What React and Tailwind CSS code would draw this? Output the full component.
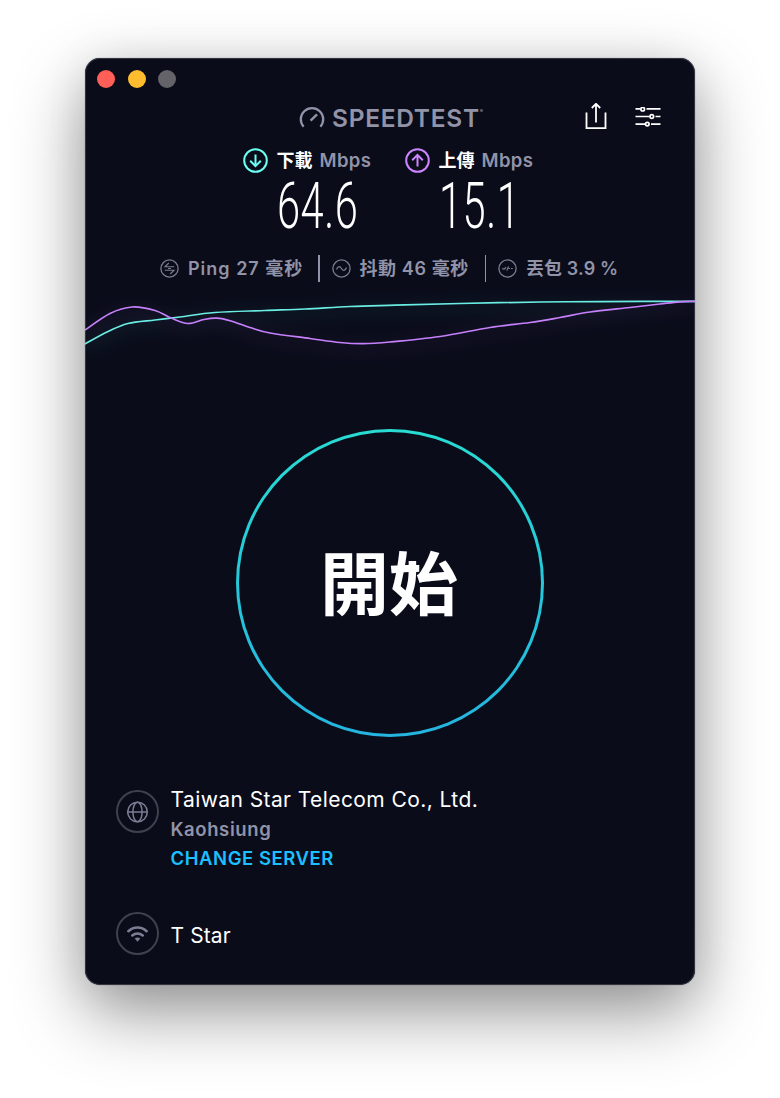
const DOWNLOAD = [[0, 54], [22, 42], [43, 33.5], [70, 30], [95, 27], [130, 22.5], [180, 20.5], [220, 19], [265, 16.5], [310, 15.2], [375, 13.5], [455, 12], [515, 11.6], [610, 11.3]];
const UPLOAD = [[0, 40], [25, 23.5], [47, 17], [70, 20.5], [86, 28], [103, 33.5], [119, 29.5], [132, 28.2], [146, 31], [165, 37.5], [185, 43], [225, 48.5], [255, 52.5], [278, 53.7], [305, 52], [355, 46.5], [405, 37.5], [445, 32.5], [475, 27.5], [505, 22], [545, 17.5], [575, 14], [595, 11.8], [610, 11.3]];

function smoothPath(pts) {
  let d = `M${pts[0][0]} ${pts[0][1]}`;
  for (let i = 0; i < pts.length - 1; i++) {
    const p0 = pts[i - 1] || pts[i];
    const p1 = pts[i];
    const p2 = pts[i + 1];
    const p3 = pts[i + 2] || p2;
    d += ` C${p1[0] + (p2[0] - p0[0]) / 6} ${p1[1] + (p2[1] - p0[1]) / 6} ${p2[0] - (p3[0] - p1[0]) / 6} ${p2[1] - (p3[1] - p1[1]) / 6} ${p2[0]} ${p2[1]}`;
  }
  return d;
}

function GaugeLogo() {
  return (
    <svg className="h-[22px] w-[26px] shrink-0" viewBox="0 0 26 22" fill="none" stroke="#9193a8">
      <path d="M4.6 20.7A11.2 11.2 0 1 1 21.4 20.7" strokeWidth="2.3" />
      <path d="M11.6 14.7L18 8.3" strokeWidth="2.4" />
    </svg>
  );
}

function ShareIcon() {
  return (
    <svg className="h-[28px] w-[22px]" viewBox="0 0 22 28" fill="none" stroke="#fff" strokeWidth="1.8">
      <path d="M1.5 9.5V25.2H20.5V9.5" />
      <path d="M11 19.5V1.2M6.8 5L11 .8L15.2 5" />
    </svg>
  );
}

function SlidersIcon() {
  return (
    <svg className="h-[20px] w-[26px]" viewBox="0 0 26 20" fill="none" stroke="#fff" strokeWidth="1.7">
      <path d="M.5 1.8H5.5M11.5 1.8H25.5M.5 9.5H14.5M20.5 9.5H25.5M.5 17.1H10M16 17.1H25.5" />
      <circle cx="7.7" cy="2.2" r="1.8" />
      <circle cx="16.8" cy="9.5" r="1.8" />
      <circle cx="12.3" cy="17.1" r="1.8" />
    </svg>
  );
}

function ArrowCircle({ color, up }) {
  return (
    <svg className="h-[25px] w-[25px] shrink-0" viewBox="0 0 25 25" fill="none" stroke={color} strokeWidth="2">
      <circle cx="12.5" cy="12.5" r="11.3" />
      {up ? <path d="M12.5 18.6V7.2M7.2 12.2L12.5 6.9L17.8 12.2" /> : <path d="M12.5 6.4V17.8M7.2 12.8L12.5 18.1L17.8 12.8" />}
    </svg>
  );
}

function Result({ color, up, label, value }) {
  return (
    <div className="flex w-[162px] gap-[9px]">
      <ArrowCircle color={color} up={up} />
      <div className="flex flex-col">
        <div className="flex h-[25px] items-center gap-[7px] whitespace-nowrap">
          <span className="text-[18px] font-bold text-white">{label}</span>
          <span className="text-[18.5px] font-semibold tracking-[0.35px] text-[#9193a8]">Mbps</span>
        </div>
        <div className="mt-[3px] h-[62px] origin-left scale-x-[0.65] whitespace-nowrap font-['Roboto',sans-serif] text-[64px] font-light leading-[62px] tracking-[0.8px] text-white">
          {value}
        </div>
      </div>
    </div>
  );
}

function StatIcon({ children }) {
  return (
    <svg className="h-[19px] w-[19px] shrink-0" viewBox="0 0 19 19" fill="none" stroke="#7b7d92" strokeWidth="1.3">
      <circle cx="9.5" cy="9.5" r="8.6" />
      {children}
    </svg>
  );
}

function Chart() {
  const down = smoothPath(DOWNLOAD);
  const up = smoothPath(UPLOAD);
  return (
    <svg className="block h-[90px] w-[610px] shrink-0" viewBox="0 0 610 90" fill="none">
      <defs>
        <filter id="glow" x="-5%" y="-60%" width="110%" height="260%">
          <feGaussianBlur stdDeviation="8" />
        </filter>
      </defs>
      <g filter="url(#glow)" strokeWidth="10" opacity="0.06">
        <path d={down} stroke="#6afff3" transform="translate(0 4)" />
        <path d={up} stroke="#bf71ff" transform="translate(0 4)" />
      </g>
      <path d={down} stroke="#6aeee4" strokeWidth="1.7" />
      <path d={up} stroke="#c680fb" strokeWidth="1.7" />
    </svg>
  );
}

export default function App() {
  return (
    <div className="flex h-[1098px] w-[780px] justify-center overflow-hidden bg-white pt-[58px] font-['Inter','Noto_Sans_CJK_TC',sans-serif]">
      <main className="flex h-[927px] w-[610px] flex-col overflow-hidden rounded-[15px] bg-[#0a0c1a] shadow-[inset_0_0_0_1px_rgba(90,92,102,0.5),0_0_1px_rgba(40,42,52,0.8),0_27px_70px_rgba(0,0,0,0.42),0_4px_44px_rgba(0,0,0,0.08)]">
        <div className="flex h-[42px] shrink-0 items-center gap-[12.5px] pl-[12px]">
          <span className="h-[18px] w-[18px] rounded-full bg-[#ff5f57]" />
          <span className="h-[18px] w-[18px] rounded-full bg-[#febc2e]" />
          <span className="h-[18px] w-[18px] rounded-full bg-[#636369]" />
        </div>

        <header className="flex h-[34px] shrink-0 items-center pl-[214px] pr-[34px]">
          <div className="flex items-center gap-[7px] text-[#9193a8]">
            <GaugeLogo />
            <h1 className="flex w-[152px] whitespace-nowrap pt-[1px] text-[24.5px] font-semibold leading-[34px] tracking-[0.7px]">
              SPEEDTEST<span className="text-[5px] leading-[20px] tracking-normal">®</span>
            </h1>
          </div>
          <div className="ml-auto flex items-center gap-[28px]">
            <ShareIcon />
            <SlidersIcon />
          </div>
        </header>

        <section className="flex h-[104px] shrink-0 pl-[157.5px] pt-[14px]">
          <Result color="#6afff3" label="下載" value="64.6" />
          <Result color="#cc85ff" up label="上傳" value="15.1" />
        </section>

        <section className="mt-[17px] flex h-[26px] shrink-0 items-center whitespace-nowrap pl-[75px] text-[18px] font-semibold text-[#9193a8]">
          <div className="flex w-[158px] items-center gap-[9px]">
            <StatIcon><path d="M14.2 7.8H5L8.8 4M4.8 11.2H14L10.2 15M8 9.5H11" strokeWidth="1.1" /></StatIcon>
            <span className="tracking-[1px]">Ping 27 毫秒</span>
          </div>
          <span className="h-[27px] w-[1.5px] bg-[#9193a8]" />
          <div className="ml-[12px] flex w-[153px] items-center gap-[9px]">
            <StatIcon><path d="M4.5 10.5C6 6.5 8 7 9.5 9.5S13 12.5 14.5 8.5" strokeWidth="1.2" /></StatIcon>
            <span className="tracking-[0.6px]">抖動 46 毫秒</span>
          </div>
          <span className="h-[27px] w-[1.5px] bg-[#9193a8]" />
          <div className="ml-[12px] flex items-center gap-[9px]">
            <StatIcon><path d="M4.2 9.8H6.7L8 8.2M8.8 11.4L10.6 7.6M10.6 9.5H12M13 9.5H14.8" strokeWidth="1.2" /></StatIcon>
            <span className="tracking-[0.1px]">丟包 3.9 %</span>
          </div>
        </section>

        <div className="mt-[9px] h-[90px] shrink-0"><Chart /></div>

        <div className="mt-[49px] flex h-[308px] shrink-0 justify-center">
          <button className="flex h-[308px] w-[308px] rounded-full bg-gradient-to-b from-[#29dcd2] to-[#25b4df] p-[3px]">
            <span className="flex h-[302px] w-[302px] items-center justify-center rounded-full bg-[#0a0c1a] pb-[7px] pr-[2px] font-['Noto_Sans_CJK_TC',sans-serif] text-[69px] font-bold leading-[80px] text-white">開始</span>
          </button>
        </div>

        <section className="mt-[47px] flex h-[94px] shrink-0 gap-[12px] pl-[31px]">
          <span className="mt-[6px] flex h-[43px] w-[43px] shrink-0 items-center justify-center rounded-full border-2 border-[#40414f]">
            <svg className="h-[22px] w-[22px]" viewBox="0 0 22 22" fill="none" stroke="#7b7d92" strokeWidth="1.5">
              <circle cx="10.5" cy="11" r="9.8" />
              <ellipse cx="10.5" cy="11" rx="4.6" ry="9.8" />
              <path d="M.7 11H20.3" />
            </svg>
          </span>
          <div className="-ml-[0.5px] flex flex-col whitespace-nowrap">
            <span className="h-[32px] text-[21px] leading-[32px] tracking-[0.42px] text-white">Taiwan Star Telecom Co., Ltd.</span>
            <span className="h-[27px] text-[18.5px] font-semibold leading-[27px] tracking-[0.6px] text-[#9193a8]">Kaohsiung</span>
            <span className="h-[30px] text-[18.5px] font-semibold leading-[30px] tracking-[0.55px] text-[#1cbfff]">CHANGE SERVER</span>
          </div>
        </section>

        <section className="mt-[34px] flex shrink-0 gap-[12px] pl-[31px]">
          <span className="flex h-[43px] w-[43px] shrink-0 items-center justify-center rounded-full border-2 border-[#40414f]">
            <svg className="h-[18px] w-[22px]" viewBox="0 0 22 18" fill="none" stroke="#7b7d92" strokeWidth="2.6" strokeLinecap="round">
              <path d="M1.4 6.2C6.5 1.2 14.5 1.2 19.6 6.2M5.3 10.4C8.3 7.8 12.7 7.8 15.7 10.4" />
              <path d="M7.7 13.6Q10.5 11.5 13.3 13.6L10.5 16.8Z" fill="#7b7d92" stroke="none" />
            </svg>
          </span>
          <span className="-ml-[0.5px] pt-[4px] text-[21px] leading-[40px] tracking-[0.1px] text-white">T Star</span>
        </section>
      </main>
    </div>
  );
}
